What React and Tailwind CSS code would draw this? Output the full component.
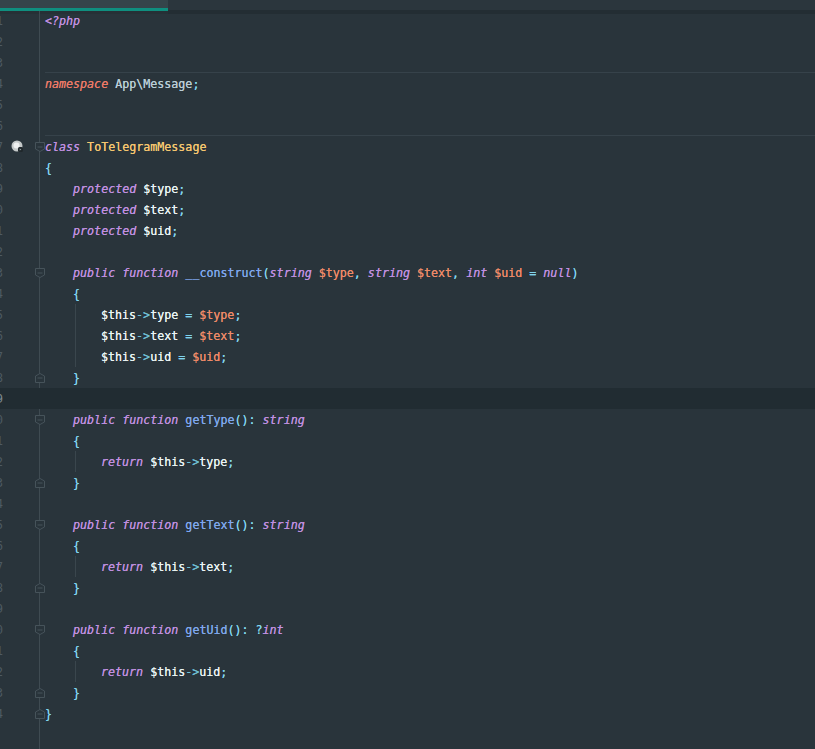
const mono = "font-['DejaVu_Sans_Mono','Liberation_Mono',monospace]";

// token colours
const kw = "text-[#c08fe0] italic";
const red = "text-[#ec7a68] italic";
const cls = "text-[#f5c66f]";
const fn = "text-[#7fa8ee]";
const p = "text-[#80d4ee]";
const v = "text-[#eaf4f4]";
const arg = "text-[#ee8a68]";
const ns = "text-[#b9cdd6]";

const arrow = ["text-[#6fbfd4]", "->"];

const lines = [
  { t: [[kw, "<?php"]] },
  {},
  { sep: true },
  { t: [[red, "namespace"], [ns, " App\\Message"], [p, ";"]] },
  {},
  { sep: true },
  { bp: true, fold: "open", t: [[kw, "class"], [cls, " ToTelegramMessage"]] },
  { t: [[p, "{"]] },
  { t: [[kw, "    protected"], [v, " $type"], [p, ";"]] },
  { t: [[kw, "    protected"], [v, " $text"], [p, ";"]] },
  { t: [[kw, "    protected"], [v, " $uid"], [p, ";"]] },
  {},
  {
    fold: "open",
    t: [[kw, "    public function"], [fn, " __construct"], [p, "("], [kw, "string"], [arg, " $type"], [p, ", "], [kw, "string"], [arg, " $text"], [p, ", "], [kw, "int"], [arg, " $uid"], [p, " = "], [kw, "null"], [p, ")"]],
  },
  { t: [[p, "    {"]] },
  { guide: true, t: [[v, "$this"], arrow, [v, "type"], [p, " = "], [arg, "$type"], [p, ";"]] },
  { guide: true, t: [[v, "$this"], arrow, [v, "text"], [p, " = "], [arg, "$text"], [p, ";"]] },
  { guide: true, t: [[v, "$this"], arrow, [v, "uid"], [p, " = "], [arg, "$uid"], [p, ";"]] },
  { fold: "close", t: [[p, "    }"]] },
  { current: true },
  { fold: "open", t: [[kw, "    public function"], [fn, " getType"], [p, "(): "], [kw, "string"]] },
  { t: [[p, "    {"]] },
  { guide: true, t: [[kw, "return"], [v, " $this"], arrow, [v, "type"], [p, ";"]] },
  { fold: "close", t: [[p, "    }"]] },
  {},
  { fold: "open", t: [[kw, "    public function"], [fn, " getText"], [p, "(): "], [kw, "string"]] },
  { t: [[p, "    {"]] },
  { guide: true, t: [[kw, "return"], [v, " $this"], arrow, [v, "text"], [p, ";"]] },
  { fold: "close", t: [[p, "    }"]] },
  {},
  { fold: "open", t: [[kw, "    public function"], [fn, " getUid"], [p, "(): ?"], [kw, "int"]] },
  { t: [[p, "    {"]] },
  { guide: true, t: [[kw, "return"], [v, " $this"], arrow, [v, "uid"], [p, ";"]] },
  { fold: "close", t: [[p, "    }"]] },
  { fold: "close", t: [[p, "}"]] },
];

function Breakpoint() {
  return (
    <svg className="mt-[4px]" width="13" height="13" viewBox="0 0 13 13">
      <circle cx="6" cy="6" r="5.5" fill="#c4c9c9" />
      <circle cx="5.5" cy="5.5" r="3" fill="#eef0f0" />
      <rect x="7" y="7" width="5" height="5" rx="1.5" fill="#20282c" />
      <path d="M8.7 8.5 L10.4 9.5 L8.7 10.5 Z" fill="#9aa4a6" />
    </svg>
  );
}

// gutter fold marker: points down when it opens a block, up when it closes one
function Fold({ type }) {
  const d = type === "open" ? "M0.5 0.5H9.5V7L5 9.5L0.5 7Z" : "M0.5 9.5H9.5V3L5 0.5L0.5 3Z";
  return (
    <svg className="mt-[6px]" width="10" height="10" viewBox="0 0 10 10">
      <path d={d} fill="#29343b" stroke="#46535a" />
      <path d="M2.5 5H7.5" stroke="#46535a" />
    </svg>
  );
}

function Line({ n, line }) {
  return (
    <div className={`flex h-[21px] ${line.current ? "bg-[#212c32]" : ""}`}>
      <div className="grid h-full w-[45px] shrink-0 grid-cols-[11px_24px_10px]">
        <div className="flex h-full w-[3px] justify-end overflow-hidden pt-px">
          <span className={`text-[11.67px] leading-[21px] ${line.current ? "text-[#7d8a90]" : "text-[#4d5a62]"}`}>{n}</span>
        </div>
        <div>{line.bp && <Breakpoint />}</div>
        <div>{line.fold && <Fold type={line.fold} />}</div>
      </div>
      <div className={`h-full flex-1 ${line.sep ? "border-b border-[#36424a]" : ""}`}>
        <div className={line.guide ? "ml-[30px] h-full border-l border-[#3a464d] pl-[25px]" : ""}>
          <pre className={`${mono} pt-px text-[11.67px] leading-[21px] [text-shadow:0_0_0.5px_currentcolor]`}>
            {(line.t || []).map(([c, s], i) => (
              <span key={i} className={c}>{s}</span>
            ))}
          </pre>
        </div>
      </div>
    </div>
  );
}

export default function App() {
  return (
    <div className={`relative h-[749px] w-[815px] overflow-hidden bg-[#29343b] ${mono}`}>
      <div className="flex h-[10px] bg-[#2b363d]">
        <div className="w-[168px] shrink-0">
          <div className="h-[8px] bg-[#35444a]" />
          <div className="h-[3px] bg-[#0f8f7f]" />
          <div className="h-[3px] bg-[#263036]" />
        </div>
        <div className="mt-[10px] h-[4px] flex-1 bg-[#232d33]" />
      </div>
      <div className="absolute bottom-0 left-[39px] top-[11px] w-px bg-[#3f4b52]" />
      <div className="relative">
        {lines.map((line, i) => (
          <Line key={i} n={i + 1} line={line} />
        ))}
      </div>
    </div>
  );
}
